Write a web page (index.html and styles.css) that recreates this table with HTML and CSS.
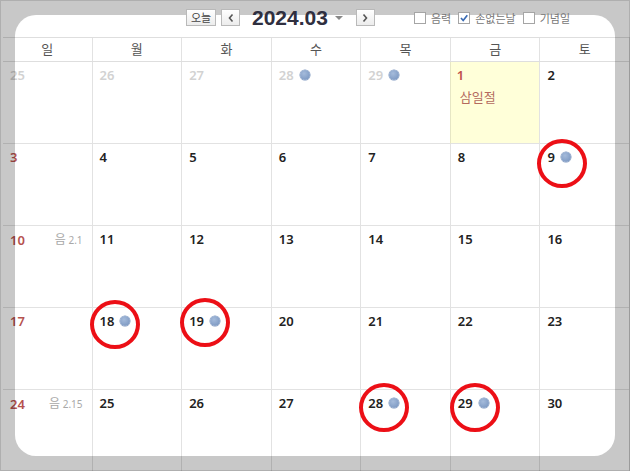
FILE: index.html
```html
<!DOCTYPE html>
<html lang="ko">
<head>
<meta charset="utf-8">
<title>2024.03</title>
<link rel="stylesheet" href="styles.css">
</head>
<body>
<div class="page">
  <div class="toolbar">
    <button class="btn btn-today">오늘</button>
    <button class="btn btn-arrow"><svg width="8" height="10" viewBox="0 0 8 10"><path d="M5.5 1.5 L2.5 5 L5.5 8.5" fill="none" stroke="#555" stroke-width="1.6"/></svg></button>
    <div class="title">2024.03<span class="caret"></span></div>
    <button class="btn btn-arrow"><svg width="8" height="10" viewBox="0 0 8 10"><path d="M2.5 1.5 L5.5 5 L2.5 8.5" fill="none" stroke="#555" stroke-width="1.6"/></svg></button>
    <div class="opts">
      <label class="opt"><span class="box"></span>음력</label>
      <label class="opt"><span class="box"><svg width="10" height="10" viewBox="0 0 10 10"><path d="M2 5 L4.2 7.5 L8.3 2.3" fill="none" stroke="#3a6bb3" stroke-width="1.7"/></svg></span>손없는날</label>
      <label class="opt"><span class="box"></span>기념일</label>
    </div>
  </div>
  <div class="weekdays">
    <div>일</div><div>월</div><div>화</div><div>수</div><div>목</div><div>금</div><div>토</div>
  </div>
  <div class="grid">
    <div class="cell"><span class="num other">25</span></div>
    <div class="cell"><span class="num other">26</span></div>
    <div class="cell"><span class="num other">27</span></div>
    <div class="cell"><span class="num other">28</span><span class="dot"></span></div>
    <div class="cell"><span class="num other">29</span><span class="dot"></span></div>
    <div class="cell holiday"><span class="num red">1</span><div class="hname">삼일절</div></div>
    <div class="cell"><span class="num">2</span></div>

    <div class="cell"><span class="num sun">3</span></div>
    <div class="cell"><span class="num">4</span></div>
    <div class="cell"><span class="num">5</span></div>
    <div class="cell"><span class="num">6</span></div>
    <div class="cell"><span class="num">7</span></div>
    <div class="cell"><span class="num">8</span></div>
    <div class="cell"><span class="num">9</span><span class="dot"></span></div>

    <div class="cell"><span class="num sun">10</span><span class="lunar"><b>음</b> 2.1</span></div>
    <div class="cell"><span class="num">11</span></div>
    <div class="cell"><span class="num">12</span></div>
    <div class="cell"><span class="num">13</span></div>
    <div class="cell"><span class="num">14</span></div>
    <div class="cell"><span class="num">15</span></div>
    <div class="cell"><span class="num">16</span></div>

    <div class="cell"><span class="num sun">17</span></div>
    <div class="cell"><span class="num">18</span><span class="dot"></span></div>
    <div class="cell"><span class="num">19</span><span class="dot"></span></div>
    <div class="cell"><span class="num">20</span></div>
    <div class="cell"><span class="num">21</span></div>
    <div class="cell"><span class="num">22</span></div>
    <div class="cell"><span class="num">23</span></div>

    <div class="cell"><span class="num sun">24</span><span class="lunar"><b>음</b> 2.15</span></div>
    <div class="cell"><span class="num">25</span></div>
    <div class="cell"><span class="num">26</span></div>
    <div class="cell"><span class="num">27</span></div>
    <div class="cell"><span class="num">28</span><span class="dot"></span></div>
    <div class="cell"><span class="num">29</span><span class="dot"></span></div>
    <div class="cell"><span class="num">30</span></div>
  </div>

  <div class="frame"></div>
  <div class="edge"></div>
  <div class="toolbar-layer"></div>

  <span class="mark mark-9"></span>
  <span class="mark mark-18"></span>
  <span class="mark mark-19"></span>
  <span class="mark mark-28"></span>
  <span class="mark mark-29"></span>
</div>
</body>
</html>
```

FILE: styles.css
```css
* { box-sizing: border-box; }
html, body { margin: 0; padding: 0; background: #fff; }
body {
  font-family: "Noto Sans CJK KR", "Noto Sans", sans-serif;
  color: #222;
}
.page {
  position: relative;
  width: 630px;
  height: 471px;
  overflow: hidden;
  background: #fff;
}

/* toolbar */
.toolbar {
  position: relative;
  z-index: 3;
  height: 37px;
  display: flex;
  align-items: flex-start;
  padding-left: 186px;
  padding-top: 9px;
}
.btn {
  height: 17px;
  margin: 0;
  padding: 0;
  border: 1px solid #b9b9b9;
  background: linear-gradient(#ffffff, #ececec);
  font-family: "Noto Sans CJK KR", sans-serif;
  font-size: 11px;
  line-height: 15px;
  color: #444;
  display: flex;
  align-items: center;
  justify-content: center;
}
.btn-today { width: 30px; margin-right: 5px; }
.btn-arrow { width: 19px; }
.title {
  font-family: "Liberation Sans", "Noto Sans", sans-serif;
  font-weight: bold;
  font-size: 21px;
  line-height: 17px;
  color: #2f2f3f;
  margin-left: 12px;
  margin-right: 13px;
  display: flex;
  align-items: center;
  height: 17px;
}
.caret {
  display: inline-block;
  margin-left: 7px;
  width: 0;
  height: 0;
  border-left: 4px solid transparent;
  border-right: 4px solid transparent;
  border-top: 4px solid #888;
}
.opts {
  display: flex;
  margin-left: 39px;
  margin-top: 3px;
  gap: 7px;
}
.opt {
  display: flex;
  align-items: center;
  font-size: 11px;
  line-height: 12px;
  color: #777;
}
.box {
  width: 12px;
  height: 12px;
  border: 1px solid #a5a5a5;
  background: #fff;
  margin-right: 5px;
  display: flex;
  align-items: center;
  justify-content: center;
}

/* weekday header */
.weekdays {
  display: grid;
  grid-template-columns: repeat(7, 1fr);
  height: 25px;
  margin-left: 3px;
  border-top: 1px solid #dedede;
  border-bottom: 1px solid #dedede;
}
.weekdays div {
  border-right: 1px solid #e2e2e2;
  text-align: center;
  font-size: 13px;
  line-height: 22px;
  color: #555;
}

/* grid */
.grid {
  display: grid;
  grid-template-columns: repeat(7, 1fr);
  grid-auto-rows: 82px;
  margin-left: 3px;
}
.cell {
  position: relative;
  border-right: 1px solid #e2e2e2;
  border-bottom: 1px solid #e2e2e2;
  padding: 5px 0 0 7px;
  display: flex;
  flex-wrap: wrap;
  align-content: flex-start;
  align-items: center;
}
.num {
  font-family: "Noto Sans", sans-serif;
  font-weight: 600;
  font-size: 13px;
  line-height: 16px;
  color: #222;
}
.num.other { color: #d2d2d2; }
.num.sun { color: #b6524f; }
.num.red { color: #c0504d; }
.dot {
  width: 10px;
  height: 10px;
  margin-left: 6px;
  border-radius: 50%;
  background: radial-gradient(circle at 40% 35%, #a5bbdb, #7f9bc4 75%);
  box-shadow: 0 0 0 0.5px #7590bb;
}
.holiday {
  background: #ffffd9;
  border-left: 1px solid #e6e6c4;
  margin-left: -1px;
  padding-left: 6px;
}
.hname {
  flex-basis: 100%;
  font-size: 13px;
  line-height: 16px;
  color: #b46a5e;
  margin-top: 6px;
  padding-left: 3px;
}
.lunar {
  margin-left: auto;
  margin-right: 9px;
  font-size: 10px;
  line-height: 16px;
  color: #a8a8a8;
  font-family: "Noto Sans", sans-serif;
}
.lunar b {
  font-family: "Noto Sans CJK KR", sans-serif;
  font-weight: normal;
  font-size: 12px;
}

/* screenshot frame */
.frame {
  position: absolute;
  z-index: 2;
  left: 15px;
  top: 15px;
  width: 600px;
  height: 441px;
  border-radius: 21px;
  box-shadow: 0 0 0 120px rgba(0, 0, 0, 0.215);
  pointer-events: none;
}
.edge {
  position: absolute;
  z-index: 2;
  inset: 0;
  border: 1px solid rgba(0, 0, 0, 0.12);
  pointer-events: none;
}

/* red annotation circles */
.mark {
  position: absolute;
  z-index: 4;
  width: 50px;
  height: 49px;
  border: 4px solid #ec0f16;
  border-radius: 50%;
}
.mark-9 { left: 537px; top: 139px; }
.mark-18 { left: 90px; top: 300px; }
.mark-19 { left: 180px; top: 298px; }
.mark-28 { left: 359px; top: 383px; }
.mark-29 { left: 450px; top: 383px; }
```
